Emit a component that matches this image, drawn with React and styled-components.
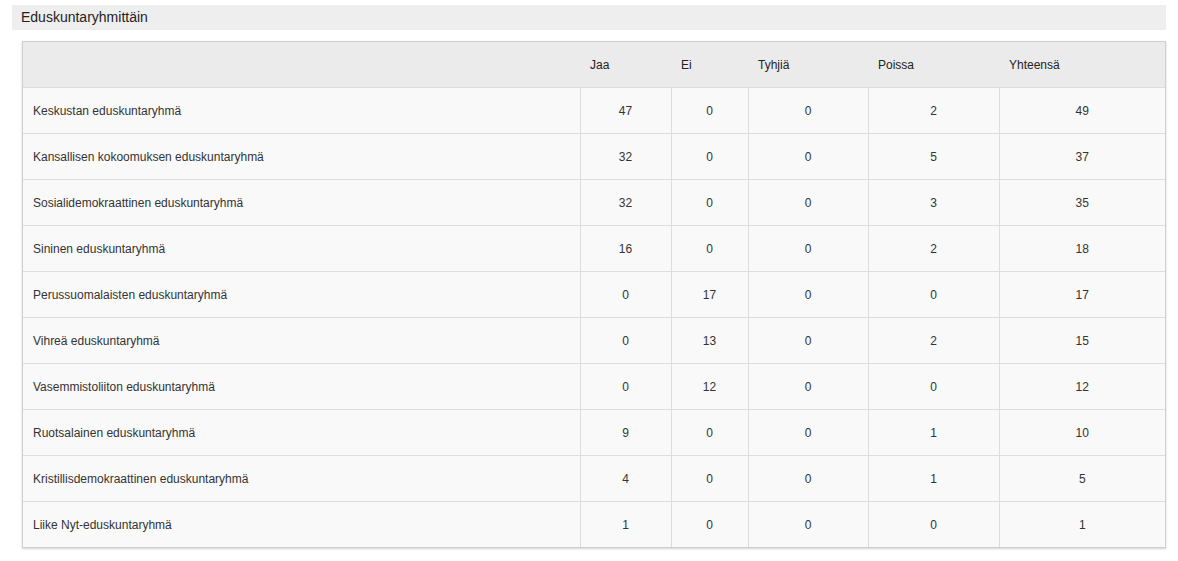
import React from 'react';
import styled, { createGlobalStyle } from 'styled-components';

const GlobalStyle = createGlobalStyle`
    body {
        margin: 0;
        background: #fff;
        font-family: "Liberation Sans", Arial, sans-serif;
        color: #333;
    }
`;

const Page = styled.div`
    padding: 5px 12px 13px 12px;
`;

const TitleBar = styled.div`
    height: 25px;
    line-height: 25px;
    background: #eeeeee;
    padding-left: 9px;
    font-size: 14px;
    color: #222;
`;

const Card = styled.div`
    margin: 11px 0 0 10px;
    border: 1px solid #cfcfcf;
    box-shadow: 0 1px 2px rgba(0, 0, 0, 0.18);
    background: #f9f9f9;
`;

const Table = styled.table`
    width: 100%;
    border-collapse: collapse;
    table-layout: fixed;
    font-size: 12px;
`;

const HeadCell = styled.th`
    height: 45px;
    padding: 0 10px;
    text-align: left;
    font-weight: normal;
    background: #ebebeb;
    color: #222;
`;

const Row = styled.tr``;

const Cell = styled.td`
    height: 45px;
    padding: 0 10px;
    text-align: ${({ $name }) => ($name ? 'left' : 'center')};
    border-left: ${({ $name }) => ($name ? 'none' : '1px solid #dddddd')};
    border-top: 1px solid #dddddd;
    color: #333;
`;

const columns = [
    { label: '', width: 557 },
    { label: 'Jaa', width: 91 },
    { label: 'Ei', width: 77 },
    { label: 'Tyhjiä', width: 120 },
    { label: 'Poissa', width: 131 },
    { label: 'Yhteensä', width: 166 },
];

const groups = [
    ['Keskustan eduskuntaryhmä', 47, 0, 0, 2, 49],
    ['Kansallisen kokoomuksen eduskuntaryhmä', 32, 0, 0, 5, 37],
    ['Sosialidemokraattinen eduskuntaryhmä', 32, 0, 0, 3, 35],
    ['Sininen eduskuntaryhmä', 16, 0, 0, 2, 18],
    ['Perussuomalaisten eduskuntaryhmä', 0, 17, 0, 0, 17],
    ['Vihreä eduskuntaryhmä', 0, 13, 0, 2, 15],
    ['Vasemmistoliiton eduskuntaryhmä', 0, 12, 0, 0, 12],
    ['Ruotsalainen eduskuntaryhmä', 9, 0, 0, 1, 10],
    ['Kristillisdemokraattinen eduskuntaryhmä', 4, 0, 0, 1, 5],
    ['Liike Nyt-eduskuntaryhmä', 1, 0, 0, 0, 1],
];

const App = () => (
    <>
        <GlobalStyle />
        <Page>
            <TitleBar>Eduskuntaryhmittäin</TitleBar>
            <Card>
                <Table>
                    <colgroup>
                        {columns.map((c, i) => (
                            <col key={i} style={{ width: c.width }} />
                        ))}
                    </colgroup>
                    <thead>
                        <tr>
                            {columns.map((c, i) => (
                                <HeadCell key={i}>{c.label}</HeadCell>
                            ))}
                        </tr>
                    </thead>
                    <tbody>
                        {groups.map(([name, ...counts]) => (
                            <Row key={name}>
                                <Cell $name>{name}</Cell>
                                {counts.map((n, i) => (
                                    <Cell key={i}>{n}</Cell>
                                ))}
                            </Row>
                        ))}
                    </tbody>
                </Table>
            </Card>
        </Page>
    </>
);

export default App;
